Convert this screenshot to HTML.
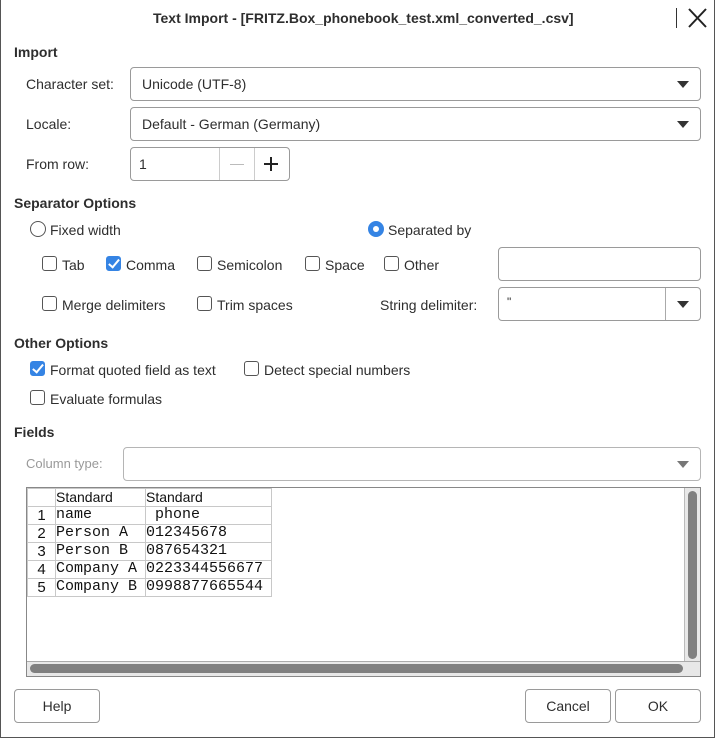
<!DOCTYPE html>
<html><head><meta charset="utf-8"><style>
*{box-sizing:border-box;margin:0;padding:0}
body{width:715px;height:738px;background:#fff;font-family:"Liberation Sans",sans-serif;font-size:14px;color:#2e2e2e;position:relative;overflow:hidden}
.frame{position:absolute;left:0;top:0;width:715px;height:738px;border:1px solid #555;border-top:none}
.a{position:absolute;white-space:nowrap}
.t{margin-top:1px}
.b{font-weight:bold}
.box{position:absolute;border:1px solid #9a9a9a;border-radius:4px;background:#fff}
.tri{position:absolute;width:0;height:0;border-left:6px solid transparent;border-right:6px solid transparent;border-top:7px solid #333}
.cb{position:absolute;width:15px;height:15px;border:1px solid #555;border-radius:3px;background:#fff}
.cb.on{background:#3584e4;border-color:#3584e4}
.cb.on::after{content:"";position:absolute;left:4px;top:0px;width:4px;height:9px;border:solid #fff;border-width:0 2px 2px 0;transform:rotate(40deg)}
.rd{position:absolute;width:16px;height:16px;border:1px solid #555;border-radius:50%;background:#fff}
.rd.on{background:#3584e4;border-color:#3584e4}
.rd.on::after{content:"";position:absolute;left:4px;top:4px;width:6px;height:6px;border-radius:50%;background:#fff}
.btn{position:absolute;border:1px solid #9a9a9a;border-radius:4px;background:#fff;text-align:center;line-height:33px}
table{border-collapse:collapse;font-family:"Liberation Mono",monospace;font-size:15px;color:#111}
td{border:1px solid #c8c8c8;height:18px;line-height:16px;padding:0;vertical-align:top;white-space:pre}
.h{font-family:"Liberation Sans",sans-serif;font-size:14px}
.n{font-family:"Liberation Sans",sans-serif;font-size:15px;text-align:center;vertical-align:bottom}
</style></head><body>
<div class="frame"></div>
<div class="a b" style="left:153px;top:10px;font-size:14px">Text Import - [FRITZ.Box_phonebook_test.xml_converted_.csv]</div>
<div class="a" style="left:676px;top:8px;width:1px;height:20px;background:#333"></div>
<svg class="a" style="left:687px;top:8px" width="22" height="20"><path d="M2 1L19 19M19 1L2 19" stroke="#222" stroke-width="2"/></svg>

<div class="a b t" style="left:14px;top:43px">Import</div>
<div class="a t" style="left:26px;top:75px">Character set:</div>
<div class="box" style="left:130px;top:67px;width:571px;height:34px"></div>
<div class="a t" style="left:142px;top:75px">Unicode (UTF-8)</div>
<div class="tri" style="left:677px;top:81px"></div>
<div class="a t" style="left:26px;top:115px">Locale:</div>
<div class="box" style="left:130px;top:107px;width:571px;height:34px"></div>
<div class="a t" style="left:142px;top:115px">Default - German (Germany)</div>
<div class="tri" style="left:677px;top:121px"></div>
<div class="a t" style="left:26px;top:155px">From row:</div>
<div class="box" style="left:130px;top:147px;width:160px;height:34px"></div>
<div class="a" style="left:219px;top:148px;width:1px;height:32px;background:#ccc"></div>
<div class="a" style="left:254px;top:148px;width:1px;height:32px;background:#ccc"></div>
<div class="a t" style="left:139px;top:155px">1</div>
<div class="a" style="left:230px;top:164px;width:14px;height:1px;background:#bbb"></div>
<div class="a" style="left:264px;top:163px;width:14px;height:2px;background:#222"></div>
<div class="a" style="left:270px;top:157px;width:2px;height:14px;background:#222"></div>

<div class="a b t" style="left:14px;top:194px">Separator Options</div>
<div class="rd" style="left:30px;top:221px"></div><div class="a t" style="left:50px;top:221px">Fixed width</div>
<div class="rd on" style="left:368px;top:221px"></div><div class="a t" style="left:388px;top:221px">Separated by</div>
<div class="cb" style="left:42px;top:256px"></div><div class="a t" style="left:62px;top:256px">Tab</div>
<div class="cb on" style="left:106px;top:256px"></div><div class="a t" style="left:126px;top:256px">Comma</div>
<div class="cb" style="left:197px;top:256px"></div><div class="a t" style="left:217px;top:256px">Semicolon</div>
<div class="cb" style="left:305px;top:256px"></div><div class="a t" style="left:325px;top:256px">Space</div>
<div class="cb" style="left:384px;top:256px"></div><div class="a t" style="left:404px;top:256px">Other</div>
<div class="box" style="left:498px;top:247px;width:203px;height:34px"></div>
<div class="cb" style="left:42px;top:296px"></div><div class="a t" style="left:62px;top:296px">Merge delimiters</div>
<div class="cb" style="left:197px;top:296px"></div><div class="a t" style="left:217px;top:296px">Trim spaces</div>
<div class="a t" style="left:380px;top:296px">String delimiter:</div>
<div class="box" style="left:498px;top:287px;width:203px;height:34px"></div>
<div class="a" style="left:665px;top:288px;width:1px;height:32px;background:#aaa"></div>
<div class="a" style="left:507px;top:295px;font-size:12px">"</div>
<div class="tri" style="left:677px;top:301px"></div>

<div class="a b t" style="left:14px;top:334px">Other Options</div>
<div class="cb on" style="left:30px;top:361px"></div><div class="a t" style="left:50px;top:361px">Format quoted field as text</div>
<div class="cb" style="left:244px;top:361px"></div><div class="a t" style="left:264px;top:361px">Detect special numbers</div>
<div class="cb" style="left:30px;top:390px"></div><div class="a t" style="left:50px;top:390px">Evaluate formulas</div>

<div class="a b t" style="left:14px;top:423px">Fields</div>
<div class="a t" style="left:26px;top:455px;color:#999;font-size:13px">Column type:</div>
<div class="box" style="left:123px;top:447px;width:578px;height:34px;border-color:#b5b5b5"></div>
<div class="tri" style="left:677px;top:461px;border-top-color:#777"></div>

<div class="a" style="left:26px;top:487px;width:675px;height:190px;border:1px solid #888;background:#fff"></div>
<table class="a" style="left:27px;top:488px">
<tr><td style="width:28px"></td><td class="h" style="width:90px">Standard</td><td class="h" style="width:126px">Standard</td></tr>
<tr><td class="n">1</td><td>name</td><td> phone</td></tr>
<tr><td class="n">2</td><td>Person A</td><td>012345678</td></tr>
<tr><td class="n">3</td><td>Person B</td><td>087654321</td></tr>
<tr><td class="n">4</td><td>Company A</td><td>0223344556677</td></tr>
<tr><td class="n">5</td><td>Company B</td><td>0998877665544</td></tr>
</table>
<div class="a" style="left:684px;top:488px;width:16px;height:188px;background:#e8e8e8;border-left:1px solid #bbb"></div>
<div class="a" style="left:688px;top:491px;width:9px;height:168px;background:#808080;border-radius:5px"></div>
<div class="a" style="left:27px;top:661px;width:673px;height:15px;background:#e8e8e8;border-top:1px solid #aaa"></div>
<div class="a" style="left:30px;top:664px;width:653px;height:9px;background:#808080;border-radius:5px"></div>

<div class="btn" style="left:14px;top:689px;width:86px;height:34px">Help</div>
<div class="btn" style="left:525px;top:689px;width:86px;height:34px">Cancel</div>
<div class="btn" style="left:615px;top:689px;width:86px;height:34px">OK</div>
</body></html>
